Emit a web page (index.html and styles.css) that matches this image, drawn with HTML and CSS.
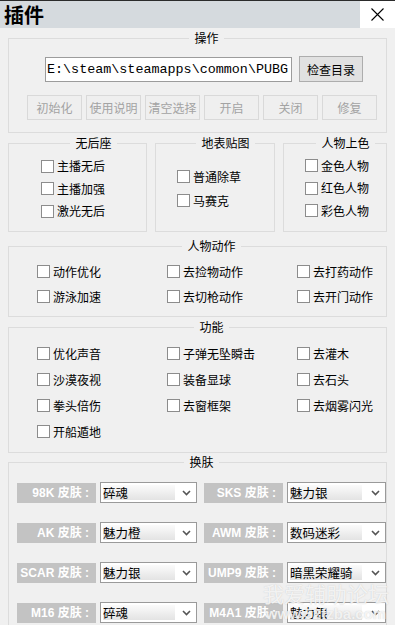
FILE: index.html
```html
<!DOCTYPE html>
<html lang="zh-CN">
<head>
    <meta charset="UTF-8">
    <title>插件</title>
    <link rel="stylesheet" href="styles.css">
</head>
<body>

    <div class="titlebar">
        <span class="title">插件</span>
        <span class="close">
            <svg width="13" height="13" viewBox="0 0 13 13"><path d="M0.5 0.5 L12.5 12.5 M12.5 0.5 L0.5 12.5" stroke="#000" stroke-width="1.1" fill="none"/></svg>
        </span>
    </div>

    <div class="main">
        <!-- 操作 -->
        <fieldset class="group ops">
            <legend>操作</legend>
            <div class="path-row">
                <input class="path" type="text" value="E:\steam\steamapps\common\PUBG">
                <button class="btn">检查目录</button>
            </div>
            <div class="btn-row">
                <button class="btn" disabled>初始化</button>
                <button class="btn" disabled>使用说明</button>
                <button class="btn" disabled>清空选择</button>
                <button class="btn" disabled>开启</button>
                <button class="btn" disabled>关闭</button>
                <button class="btn" disabled>修复</button>
            </div>
        </fieldset>

        <div class="group-row">
            <fieldset class="group recoil">
                <legend>无后座</legend>
                <label class="check"><input type="checkbox"><span>主播无后</span></label>
                <label class="check"><input type="checkbox"><span>主播加强</span></label>
                <label class="check"><input type="checkbox"><span>激光无后</span></label>
            </fieldset>
            <fieldset class="group ground">
                <legend>地表贴图</legend>
                <label class="check"><input type="checkbox"><span>普通除草</span></label>
                <label class="check"><input type="checkbox"><span>马赛克</span></label>
            </fieldset>
            <fieldset class="group tint">
                <legend>人物上色</legend>
                <label class="check"><input type="checkbox"><span>金色人物</span></label>
                <label class="check"><input type="checkbox"><span>红色人物</span></label>
                <label class="check"><input type="checkbox"><span>彩色人物</span></label>
            </fieldset>
        </div>

        <!-- 人物动作 -->
        <fieldset class="group actions">
            <legend>人物动作</legend>
            <div class="grid">
                <label class="check"><input type="checkbox"><span>动作优化</span></label>
                <label class="check"><input type="checkbox"><span>去捡物动作</span></label>
                <label class="check"><input type="checkbox"><span>去打药动作</span></label>
                <label class="check"><input type="checkbox"><span>游泳加速</span></label>
                <label class="check"><input type="checkbox"><span>去切枪动作</span></label>
                <label class="check"><input type="checkbox"><span>去开门动作</span></label>
            </div>
        </fieldset>

        <!-- 功能 -->
        <fieldset class="group features">
            <legend>功能</legend>
            <div class="grid">
                <label class="check"><input type="checkbox"><span>优化声音</span></label>
                <label class="check"><input type="checkbox"><span>子弹无坠瞬击</span></label>
                <label class="check"><input type="checkbox"><span>去灌木</span></label>
                <label class="check"><input type="checkbox"><span>沙漠夜视</span></label>
                <label class="check"><input type="checkbox"><span>装备显球</span></label>
                <label class="check"><input type="checkbox"><span>去石头</span></label>
                <label class="check"><input type="checkbox"><span>拳头倍伤</span></label>
                <label class="check"><input type="checkbox"><span>去窗框架</span></label>
                <label class="check"><input type="checkbox"><span>去烟雾闪光</span></label>
                <label class="check"><input type="checkbox"><span>开船遁地</span></label>
            </div>
        </fieldset>

        <!-- 换肤 -->
        <fieldset class="group skins">
            <legend>换肤</legend>
            <div class="skin-grid">
                <div class="skin"><span class="skin-label">98K 皮肤 :</span><div class="select"><span class="value">碎魂</span><svg class="arrow" width="9" height="6" viewBox="0 0 9 6"><path d="M1 1 L4.5 4.5 L8 1" stroke="#555" stroke-width="1.6" fill="none"/></svg></div></div>
                <div class="skin"><span class="skin-label">SKS 皮肤 :</span><div class="select"><span class="value">魅力银</span><svg class="arrow" width="9" height="6" viewBox="0 0 9 6"><path d="M1 1 L4.5 4.5 L8 1" stroke="#555" stroke-width="1.6" fill="none"/></svg></div></div>
                <div class="skin"><span class="skin-label">AK 皮肤 :</span><div class="select"><span class="value">魅力橙</span><svg class="arrow" width="9" height="6" viewBox="0 0 9 6"><path d="M1 1 L4.5 4.5 L8 1" stroke="#555" stroke-width="1.6" fill="none"/></svg></div></div>
                <div class="skin"><span class="skin-label">AWM 皮肤 :</span><div class="select"><span class="value">数码迷彩</span><svg class="arrow" width="9" height="6" viewBox="0 0 9 6"><path d="M1 1 L4.5 4.5 L8 1" stroke="#555" stroke-width="1.6" fill="none"/></svg></div></div>
                <div class="skin"><span class="skin-label">SCAR 皮肤 :</span><div class="select"><span class="value">魅力银</span><svg class="arrow" width="9" height="6" viewBox="0 0 9 6"><path d="M1 1 L4.5 4.5 L8 1" stroke="#555" stroke-width="1.6" fill="none"/></svg></div></div>
                <div class="skin"><span class="skin-label">UMP9 皮肤 :</span><div class="select"><span class="value">暗黑荣耀骑</span><svg class="arrow" width="9" height="6" viewBox="0 0 9 6"><path d="M1 1 L4.5 4.5 L8 1" stroke="#555" stroke-width="1.6" fill="none"/></svg></div></div>
                <div class="skin"><span class="skin-label">M16 皮肤 :</span><div class="select"><span class="value">碎魂</span><svg class="arrow" width="9" height="6" viewBox="0 0 9 6"><path d="M1 1 L4.5 4.5 L8 1" stroke="#555" stroke-width="1.6" fill="none"/></svg></div></div>
                <div class="skin"><span class="skin-label">M4A1 皮肤 :</span><div class="select"><span class="value">魅力银</span><svg class="arrow" width="9" height="6" viewBox="0 0 9 6"><path d="M1 1 L4.5 4.5 L8 1" stroke="#555" stroke-width="1.6" fill="none"/></svg></div></div>
            </div>
        </fieldset>
    </div>

    <!-- watermark over the corner -->
    <div class="watermark">
        <div class="wm-name">我爱辅助论坛</div>
        <div class="wm-url">www.52fzba.com</div>
    </div>

</body>
</html>
```

FILE: styles.css
```css
body {
    margin: 0;
    width: 395px;
    height: 625px;
    overflow: hidden;
    position: relative;
    background-color: #f0f0f0;
    font-family: "Noto Sans CJK SC", sans-serif;
    font-size: 12px;
    color: #000;
}

/* Window title bar */
.titlebar {
    height: 27px;
    border-top: 1px solid #2b2b2b;
    background-color: #d5dade;
    display: flex;
    justify-content: space-between;
}

.title {
    font-weight: bold;
    font-size: 20px;
    line-height: 27px;
    padding-left: 4px;
}

.close {
    width: 35px;
    background-color: #fff;
    display: flex;
    justify-content: center;
    align-items: center;
}

.main {
    padding: 2px 8px 0;
}

/* Group boxes */
.group {
    margin: 0;
    padding: 0;
    min-width: 0;
    border: 1px solid #dcdcdc;
    box-sizing: border-box;
}

.group legend {
    margin: 0 auto;
    padding: 0 5px;
    font-size: 12px;
    line-height: 16px;
}

.ops {
    padding: 10px 0 12px 18px;
}

.path-row {
    display: flex;
    align-items: center;
    gap: 7px;
    margin-left: 18px;
}

.path {
    width: 247px;
    height: 25px;
    box-sizing: border-box;
    margin: 0;
    padding: 0 1px;
    border: 1px solid #9c9c9c;
    background: #fff;
    font-family: "Liberation Mono", monospace;
    font-size: 13.4px;
    color: #000;
}

.btn {
    height: 25px;
    margin: 0;
    padding: 0;
    font-family: "Noto Sans CJK SC", sans-serif;
    font-size: 12px;
    color: #000;
    background-color: #e1e1e1;
    border: 1px solid #adadad;
}

.path-row .btn {
    width: 64px;
    height: 26px;
}

.btn-row {
    display: flex;
    gap: 4px;
    margin-top: 13px;
}

.btn-row .btn {
    width: 55px;
    color: #a3a3a3;
    background-color: #efefef;
    border-color: #d9d9d9;
}

/* Three small groups */
.group-row {
    display: flex;
    gap: 8px;
    margin-top: 2px;
}

.group-row .group {
    height: 97px;
    display: flex;
    flex-direction: column;
}

.recoil {
    width: 139px;
    padding: 5px 0 0 32px;
    gap: 2.5px;
}

.ground {
    width: 120px;
    padding: 15.5px 0 0 21px;
    gap: 4px;
}

.tint {
    width: 104px;
    padding: 4.5px 0 0 21px;
    gap: 2.5px;
}

/* Checkboxes */
.check {
    display: flex;
    align-items: center;
    gap: 3px;
    height: 20px;
    line-height: 20px;
    white-space: nowrap;
}

.check input {
    appearance: none;
    width: 13px;
    height: 13px;
    margin: 0;
    border: 1px solid #8c8c8c;
    background-color: #fff;
}

.grid {
    display: grid;
    grid-template-columns: 130px 130px 110px;
}

.actions {
    margin-top: 6px;
    padding: 7.5px 0 9.5px 28px;
}

.actions .grid {
    row-gap: 5px;
}

.features {
    margin-top: 2px;
    padding: 8.5px 0 10px 28px;
}

.features .grid {
    row-gap: 6px;
}

/* Skins */
.skins {
    margin-top: 1.5px;
    padding: 12px 0 20px 8px;
}

.skin-grid {
    display: grid;
    grid-template-columns: 180px 182px;
    column-gap: 7px;
    row-gap: 19px;
}

.skin {
    display: flex;
    align-items: center;
    gap: 4px;
}

.skin-label {
    width: 79px;
    height: 20px;
    box-sizing: border-box;
    padding-right: 7px;
    background-color: #c3c3c3;
    color: #fff;
    font-family: "Liberation Sans", "Noto Sans CJK SC", sans-serif;
    font-weight: bold;
    font-size: 12px;
    line-height: 20px;
    text-align: right;
    white-space: nowrap;
}

.select {
    flex: 1;
    height: 21px;
    box-sizing: border-box;
    border: 1px solid #9a9a9a;
    background-color: #fff;
    display: flex;
    align-items: center;
    padding: 2px 5px 2px 2px;
}

.value {
    width: 72px;
    height: 15px;
    line-height: 15px;
    font-size: 12.5px;
    background: linear-gradient(#fbfbfb, #e3e3e3);
    white-space: nowrap;
}

.arrow {
    margin-left: auto;
}

/* Forum watermark */
.watermark {
    position: absolute;
    right: 6px;
    bottom: 2px;
    text-align: center;
    color: rgba(255, 255, 255, 0.8);
    text-shadow: 0 0 1px rgba(150, 150, 150, 0.5);
}

.wm-name {
    font-size: 21px;
    line-height: 24px;
    letter-spacing: 0;
}

.wm-url {
    font-family: "Liberation Sans", sans-serif;
    font-weight: bold;
    font-size: 15px;
    line-height: 18px;
}
```
